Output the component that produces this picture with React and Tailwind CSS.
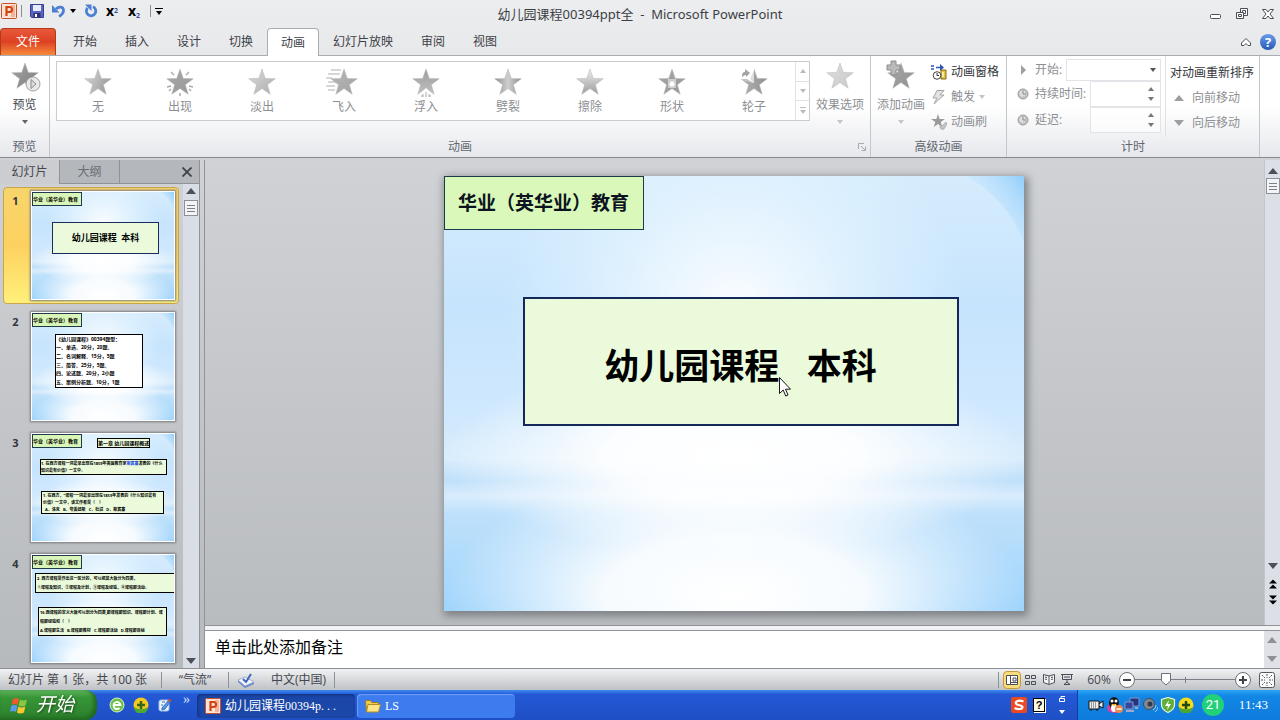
import React, { useState } from 'react';

const STAR = '16,3 19.3,12.4 29.3,12.7 21.4,18.7 24.2,28.3 16,22.6 7.8,28.3 10.6,18.7 2.7,12.7 12.7,12.4';

const tabs = ['开始', '插入', '设计', '切换', '动画', '幻灯片放映', '审阅', '视图'];

const effects = [
  { id: 'none', label: '无' },
  { id: 'appear', label: '出现' },
  { id: 'fade', label: '淡出' },
  { id: 'fly', label: '飞入' },
  { id: 'float', label: '浮入' },
  { id: 'split', label: '劈裂' },
  { id: 'wipe', label: '擦除' },
  { id: 'shape', label: '形状' },
  { id: 'wheel', label: '轮子' },
];

// gradient direction and stops for each star
const starFills = {
  none: { x2: 1, y2: 0.4, stops: ['#dcdcdc', '#9c9c9c'] },
  appear: { x2: 1, y2: 1, stops: ['#a8a8a8', '#989898'] },
  fade: { x2: 1, y2: 1, stops: ['#dadada', '#adadad'] },
  fly: { x2: 1, y2: 1, stops: ['#b8b8b8', '#a2a2a2'] },
  float: { x2: 0, y2: 1, stops: ['#9c9c9c', '#c0c0c0'] },
  split: { x2: 1, y2: 0, stops: ['#8d8d8d', '#cfcfcf', '#8d8d8d'] },
  wipe: { x2: 0, y2: 1, stops: ['#eeeeee', '#9c9c9c'] },
  shape: { x2: 1, y2: 1, stops: ['#a6a6a6', '#999999'] },
  wheel: { x2: 1, y2: 0, stops: ['#b4b4b4', '#909090'] },
  preview: { x2: 1, y2: 1, stops: ['#a4a4a4', '#7e7e7e'] },
  options: { x2: 1, y2: 1, stops: ['#dedede', '#c9c9c9'] },
  add: { x2: 1, y2: 1, stops: ['#a9a9a9', '#8f8f8f'] },
};

function StarIcon({ kind }) {
  const fill = starFills[kind];
  const id = `star-${kind}`;
  return (
    <svg viewBox="0 0 32 32" className="h-8 w-8 shrink-0 overflow-visible" aria-hidden="true">
      <defs>
        <linearGradient id={id} x1="0" y1="0" x2={fill.x2} y2={fill.y2}>
          {fill.stops.map((color, i) => (
            <stop key={i} offset={i / (fill.stops.length - 1)} stopColor={color} />
          ))}
        </linearGradient>
      </defs>
      <polygon points={STAR} fill={`url(#${id})`} stroke="#b5b5b5" strokeWidth="0.5" />
      {kind === 'appear' && (
        <path d="M7 6l3 3M25 6l-3 3M3 21l4-1M29 21l-4-1M16 27v3M5 25l2-2M27 25l-2-2" stroke="#a8a8a8" strokeWidth="1.4" />
      )}
      {kind === 'fly' && (
        <path d="M3 4h10M0 8h12M-2 12h6M0 16h8M-2 20h9M0 24h7" stroke="#b0b0b0" strokeWidth="1.2" />
      )}
      {kind === 'float' && (
        <g>
          <path d="M8 30l8-8 8 8z" fill="#fff" />
          <path d="M16 26v5M13 28v3M19 28v3M11 30h2M19 30h2" stroke="#bdbdbd" strokeWidth="1.3" />
        </g>
      )}
      {kind === 'shape' && (
        <g>
          <path d="M12 13h8v9h-8z" fill="#cfcfcf" />
          <circle cx="16" cy="18" r="2.5" fill="#fff" />
        </g>
      )}
      {kind === 'wheel' && (
        <g>
          <path d="M1 12L14 1l2 1v15L6 14z" fill="#fff" />
          <path d="M16 17V4l-4 9z" fill="#dedede" />
          <path d="M16 17L6 14l-3-1h6z" fill="#c4c4c4" />
          <path d="M4 11c0-4 1-5 3-5V3l5 4-4 4V9c-2 0-2 1-4 2z" fill="#a3a3a3" />
        </g>
      )}
      {kind === 'preview' && (
        <g>
          <circle cx="24" cy="24" r="7" fill="#e9e9e9" stroke="#a0a0a0" />
          <path d="M22 19.500l5 4.500-5 4.500z" fill="#dadada" stroke="#8a8a8a" />
        </g>
      )}
      {kind === 'add' && (
        <path d="M6 1h5v4h4v5h-4v5H6v-5H2V5h4z" fill="#b9b9b9" stroke="#8d8d8d" />
      )}
    </svg>
  );
}

function Arrow({ up = false, className = 'text-[#777]' }) {
  return (
    <svg viewBox="0 0 6 4" className={`h-1 w-1.5 shrink-0 ${className}`} aria-hidden="true">
      <path d={up ? 'M0 4h6L3 0z' : 'M0 0h6L3 4z'} fill="currentColor" />
    </svg>
  );
}

function BigArrow({ up = false, color = 'text-[#4c5059]', className = '' }) {
  return (
    <svg viewBox="0 0 10 6" className={`h-1.5 w-2.5 shrink-0 ${color} ${className}`} aria-hidden="true">
      <path d={up ? 'M0 6h10L5 0z' : 'M0 0h10L5 6z'} fill="currentColor" />
    </svg>
  );
}

function PowerPointLogo() {
  return (
    <svg viewBox="0 0 16 16" className="h-4 w-4 shrink-0" aria-hidden="true">
      <rect x="0.5" y="0.5" width="15" height="15" rx="1" fill="#fbe3d6" stroke="#c9502a" />
      <path d="M10 2h4v12h-4z" fill="#f3b49a" />
      <path d="M5.500 13V4h3a2.500 2.500 0 010 5h-3" fill="none" stroke="#d2430f" strokeWidth="2.200" />
    </svg>
  );
}

function TitleBar() {
  return (
    <header className="grid h-7 grid-cols-[1fr_auto_1fr] items-center pt-px">
      <div className="flex items-center self-start pt-0.5 pl-px">
        <PowerPointLogo />
        <span className="ml-1 h-3 w-px bg-[#8b8e94]" />
        <button className="ml-2" aria-label="保存">
          <svg viewBox="0 0 14 14" className="h-3.5 w-3.5">
            <path d="M0.500 0.500h13v13h-12l-1-1z" fill="#5b63c4" stroke="#3a3f94" />
            <path d="M3 1h8v6H3z" fill="#e8ecfb" />
            <path d="M3.500 9h7v4.500h-7z" fill="#2f3477" />
            <path d="M5 10h2v3H5z" fill="#fff" />
          </svg>
        </button>
        <button className="ml-2" aria-label="撤消">
          <svg viewBox="0 0 14 14" className="h-3.5 w-3.5">
            <path d="M4 5c3-3 7.500-2.500 7.500 1.500 0 3-2 4.500-4.500 6" fill="none" stroke="#4a7fd2" strokeWidth="2.800" />
            <path d="M0 1v7.500h7.500z" fill="#4a7fd2" />
          </svg>
        </button>
        <Arrow className="ml-1 text-black" />
        <button className="ml-2" aria-label="恢复">
          <svg viewBox="0 0 14 14" className="h-3.5 w-3.5">
            <path d="M9 2.800a4.700 4.700 0 11-5.500 1.200" fill="none" stroke="#4a7fd2" strokeWidth="2.800" />
            <path d="M1 0.500h6.500v6.500z" fill="#4a7fd2" />
          </svg>
        </button>
        <button className="ml-2 w-3.5 text-left text-sm leading-4 font-bold text-black" aria-label="上标">x<sup className="text-[7px] text-[#3c4c9c]">2</sup></button>
        <button className="ml-2 w-3.5 text-left text-sm leading-4 font-bold text-black" aria-label="下标">x<sub className="text-[7px] text-[#3c4c9c]">2</sub></button>
        <span className="ml-2 h-3 w-px bg-[#8b8e94]" />
        <button className="ml-1 flex flex-col items-center gap-0.5" aria-label="自定义快速访问工具栏">
          <span className="h-px w-2 bg-black" />
          <Arrow className="text-black" />
        </button>
      </div>
      <h1 className="font-['Noto_Sans','Noto_Sans_CJK_SC',sans-serif] text-[13px] whitespace-pre text-[#3b3f45]">幼儿园课程00394ppt全  -  Microsoft PowerPoint</h1>
      <div className="flex items-center justify-end gap-3.5 pr-1.5 pb-0.5 text-[#4a4e58]">
        <button aria-label="最小化">
          <svg viewBox="0 0 12 12" className="h-3 w-3" fill="#fff" stroke="currentColor"><rect x="0.5" y="6.500" width="10" height="4" rx="1" /></svg>
        </button>
        <button aria-label="还原">
          <svg viewBox="0 0 12 12" className="h-3 w-3" fill="#fff" stroke="currentColor">
            <path d="M4.500 0.500h7v7h-7z" /><path d="M6.500 2.500h3v3h-3z" />
            <path d="M0.500 4.500h7v6h-7z" /><path d="M2.500 6.500h3v2h-3z" />
          </svg>
        </button>
        <button aria-label="关闭">
          <svg viewBox="0 0 12 12" className="h-3 w-3" fill="#fff" stroke="currentColor">
            <path d="M0.500 1.500h3.500l2 2.500 2-2.500h3.500l-3.500 4.500 3.500 4.500H8L6 8l-2 2.500H0.500L4 6z" />
          </svg>
        </button>
      </div>
    </header>
  );
}

function RibbonTabs({ active, onSelect }) {
  return (
    <nav className="flex h-7 items-end border-b border-[#a9adb2] text-xs text-[#3c4046]">
      <button className="h-[27px] w-14 rounded-t border border-b-0 border-[#b23a1a] bg-linear-to-b from-[#e8593a] via-[#dd4022] to-[#f58a3c] text-white">文件</button>
      <div className="ml-[3px] flex items-end">
        {tabs.map((tab) => (
          <button
            key={tab}
            onClick={() => onSelect(tab)}
            className={
              tab === active
                ? '-mb-px h-7 rounded-t border border-b-0 border-[#a9adb2] bg-white px-[13px]'
                : 'h-[27px] border-x border-transparent px-[13px] hover:bg-white/50'
            }
          >
            {tab}
          </button>
        ))}
      </div>
      <div className="ml-auto flex items-center gap-2 self-center pr-1">
        <button aria-label="功能区最小化">
          <svg viewBox="0 0 12 12" className="h-3 w-3" fill="#fff" stroke="#4a4e58">
            <path d="M1.500 7L6 2.500 10.500 7v2.500H8L6 7.500 4 9.500H1.500z" />
          </svg>
        </button>
        <button className="h-4 w-4 rounded-full bg-linear-to-b from-[#6b9be8] to-[#2559b8] text-[13px] leading-4 font-bold text-white" aria-label="帮助">?</button>
      </div>
    </nav>
  );
}

function Group({ label, className = '', launcher, children }) {
  return (
    <section className={`flex flex-col border-r border-[#c3c6cb] ${className}`}>
      <div className="flex h-20 flex-1">{children}</div>
      <div className="relative h-5 text-center text-xs leading-5 text-[#62666e]">
        {label}
        {launcher && (
          <button className="absolute right-1 bottom-1.5" aria-label="显示其他效果选项">
            <svg viewBox="0 0 8 8" className="h-2 w-2" fill="none" stroke="#aaa">
              <path d="M0.500 6V0.500H6M3 3l4 4M7.500 3.500v4h-4" />
            </svg>
          </button>
        )}
      </div>
    </section>
  );
}

function ClockIcon() {
  return (
    <svg viewBox="0 0 12 12" className="h-3 w-3 shrink-0" aria-hidden="true">
      <circle cx="6" cy="6" r="5" fill="#c4c4c4" stroke="#999" />
      <circle cx="5.500" cy="5.500" r="3" fill="#dedede" />
      <path d="M6 2.500V6h3" fill="none" stroke="#8a8a8a" />
    </svg>
  );
}

function Spinner({ id, label }) {
  return (
    <div className="flex h-[26px] items-center">
      <ClockIcon />
      <label htmlFor={id} className="ml-1.5 w-[55px] whitespace-nowrap">{label}</label>
      <div className="flex h-[26px] flex-1 items-center border border-[#e2e4e8] bg-white/60 pr-1.5">
        <input id={id} className="h-full w-0 min-w-0 flex-1 outline-none" />
        <span className="flex flex-col gap-1.5">
          <Arrow up />
          <Arrow />
        </span>
      </div>
    </div>
  );
}

function Ribbon() {
  return (
    <div className="flex h-[102px] border-b border-[#868996] bg-linear-to-b from-white via-white to-[#e6e8ec] text-xs text-[#8d8f93]">
      <Group label="预览" className="w-[50px]">
        <button className="flex w-full flex-col items-center pt-1 text-[#44474d]">
          <StarIcon kind="preview" />
          <span className="mt-1 leading-[18px]">预览</span>
          <Arrow className="mt-1.5 text-[#666]" />
        </button>
      </Group>

      <Group label="动画" className="flex-1" launcher>
        <div className="ml-1.5 mt-[5px] flex h-[60px] flex-1 border border-[#c9ccd0] bg-white">
          <div className="grid flex-1 grid-cols-9">
            {effects.map((effect) => (
              <button key={effect.id} className="flex flex-col items-center pt-1">
                <StarIcon kind={effect.id} />
                <span className="leading-[18px]">{effect.label}</span>
              </button>
            ))}
          </div>
          <div className="flex w-3.5 flex-col divide-y divide-[#e0e2e5] border-l border-[#e0e2e5]">
            <button className="flex flex-1 items-center justify-center" aria-label="上一行"><Arrow up className="text-[#bbb]" /></button>
            <button className="flex flex-1 items-center justify-center" aria-label="下一行"><Arrow className="text-[#bbb]" /></button>
            <button className="flex flex-1 flex-col items-center justify-center gap-0.5" aria-label="其他">
              <span className="h-px w-1.5 bg-[#bbb]" />
              <Arrow className="text-[#bbb]" />
            </button>
          </div>
        </div>
        <button className="flex w-[60px] flex-col items-center pt-1">
          <StarIcon kind="options" />
          <span className="mt-1 leading-[18px]">效果选项</span>
          <Arrow className="mt-1.5 text-[#c4c4c4]" />
        </button>
      </Group>

      <Group label="高级动画" className="w-[136px]">
        <button className="flex w-[60px] flex-col items-center pt-1">
          <StarIcon kind="add" />
          <span className="mt-1 leading-[18px]">添加动画</span>
          <Arrow className="mt-1.5 text-[#c4c4c4]" />
        </button>
        <div className="flex flex-col pt-[3px]">
          <button className="flex h-[25px] items-center gap-1 text-[#33363b]">
            <svg viewBox="0 0 16 16" className="h-4 w-4" aria-hidden="true">
              <path d="M0 2h3M0 5h3M5 3.500h5" stroke="#2c55b8" strokeWidth="1.500" />
              <path d="M9 0l4 3.500L9 7z" fill="#2c55b8" />
              <path d="M10 6h5v9h-5z" fill="#e8c04a" stroke="#8a6a14" />
              <path d="M12 8v5" stroke="#fff6c8" strokeWidth="1.500" />
              <circle cx="6" cy="11.500" r="3.800" fill="#fff" stroke="#444" />
              <path d="M6 9v2.500h2" fill="none" stroke="#333" />
            </svg>
            动画窗格
          </button>
          <button className="flex h-[25px] items-center gap-1">
            <svg viewBox="0 0 16 16" className="h-4 w-4" aria-hidden="true">
              <path d="M6 1.500h7l-4 4.500h4L3 15l3-6H2z" fill="#e2e2e2" stroke="#a5a5a5" />
            </svg>
            触发
            <Arrow className="text-[#c4c4c4]" />
          </button>
          <button className="flex h-[25px] items-center gap-1">
            <svg viewBox="0 0 16 16" className="h-4 w-4" aria-hidden="true">
              <path d="M7 0l1.600 5H14l-4.200 3 1.500 5L7 10l-4.300 3 1.600-5L0 5h5.400z" fill="#9a9a9a" />
              <path d="M9 10l2 2 4-4 1 2-3 5c-2 1-4 0-4-2z" fill="#c4c4c4" stroke="#999" strokeWidth="0.600" />
            </svg>
            动画刷
          </button>
        </div>
      </Group>

      <Group label="计时" className="w-[253px]">
        <div className="flex w-[159px] flex-col border-r border-[#dfe1e4] pt-[3px] pr-1 pl-2.5">
          <div className="flex h-[22px] items-center">
            <svg viewBox="0 0 12 12" className="h-3 w-3 shrink-0" aria-hidden="true">
              <path d="M4 1l5 5-5 5z" fill="#a0a0a0" />
            </svg>
            <label htmlFor="start" className="ml-1.5 w-[31px] whitespace-nowrap">开始:</label>
            <div className="relative flex h-[22px] flex-1 items-center border border-[#e2e4e8] bg-white/60">
              <select id="start" className="h-full w-full appearance-none outline-none" defaultValue="">
                <option value=""></option>
              </select>
              <Arrow className="absolute right-1 text-[#555]" />
            </div>
          </div>
          <Spinner id="duration" label="持续时间:" />
          <Spinner id="delay" label="延迟:" />
        </div>
        <div className="flex flex-col pt-1 pl-1">
          <div className="h-[25px] leading-[25px] text-[#33363b]">对动画重新排序</div>
          <button className="flex h-[25px] items-center gap-2 pl-1"><BigArrow up color="text-[#9c9ea2]" />向前移动</button>
          <button className="flex h-[25px] items-center gap-2 pl-1"><BigArrow color="text-[#9c9ea2]" />向后移动</button>
        </div>
      </Group>
      <div className="w-5" />
    </div>
  );
}

// Light blue "flow" theme background
function SlideBackground({ id }) {
  return (
    <svg viewBox="0 0 580 435" preserveAspectRatio="none" className="absolute inset-0 h-full w-full" aria-hidden="true">
      <defs>
        <linearGradient id={`${id}-base`} x1="0" y1="0" x2="0" y2="1">
          <stop offset="0" stopColor="#d6ecfd" />
          <stop offset="0.3" stopColor="#c6e4fd" />
          <stop offset="0.55" stopColor="#cfe8fe" />
          <stop offset="0.65" stopColor="#d9edfc" />
          <stop offset="0.7" stopColor="#bfe0fa" />
          <stop offset="0.735" stopColor="#d9ecfd" />
          <stop offset="0.775" stopColor="#bfe1fb" />
          <stop offset="1" stopColor="#9fd4fc" />
        </linearGradient>
        <radialGradient id={`${id}-top`} cx="0.5" cy="0.5" r="0.5">
          <stop offset="0" stopColor="#fbfdff" />
          <stop offset="0.4" stopColor="#eef8ff" stopOpacity="0.75" />
          <stop offset="0.75" stopColor="#e2f4ff" stopOpacity="0.4" />
          <stop offset="1" stopColor="#e2f4ff" stopOpacity="0" />
        </radialGradient>
        <radialGradient id={`${id}-low`} cx="0.5" cy="0.5" r="0.5">
          <stop offset="0" stopColor="#fff" />
          <stop offset="0.45" stopColor="#fff" stopOpacity="0.9" />
          <stop offset="0.75" stopColor="#fff" stopOpacity="0.4" />
          <stop offset="1" stopColor="#fff" stopOpacity="0" />
        </radialGradient>
        <linearGradient id={`${id}-corner`} x1="1" y1="0" x2="0.4" y2="0.5">
          <stop offset="0" stopColor="#8fcefb" />
          <stop offset="1" stopColor="#bfe2fd" stopOpacity="0.3" />
        </linearGradient>
      </defs>
      <rect width="580" height="435" fill={`url(#${id}-base)`} />
      <ellipse cx="290" cy="130" rx="230" ry="210" fill={`url(#${id}-top)`} />
      <ellipse cx="290" cy="280" rx="290" ry="100" fill={`url(#${id}-low)`} />
      <ellipse cx="290" cy="420" rx="290" ry="130" fill={`url(#${id}-low)`} />
      <path d="M522 0Q562 22 580 66V0z" fill={`url(#${id}-corner)`} />
    </svg>
  );
}

function ThumbBrand() {
  return (
    <div className="absolute top-0 left-0 flex h-3.5 w-[50px] items-center overflow-hidden border border-[#1f3a4a] bg-[#d9f5b8] text-[5px] leading-none font-bold whitespace-nowrap">
      华业（英华业）教育
    </div>
  );
}

function SlideOneThumb() {
  return (
    <div className="absolute top-[30px] left-5 flex h-8 w-[107px] items-center justify-center border border-[#1a2c5c] bg-[#eafadb] text-[9px] font-bold whitespace-pre">
      幼儿园课程  本科
    </div>
  );
}

function SlideTwoThumb() {
  const lines = [
    '《幼儿园课程》00394题型：',
    '一、单选。20分，20题。',
    '二、名词解释。15分，5题',
    '三、简答。25分，5题。',
    '四、论述题。20分，2小题',
    '五、案例分析题。10分，1题',
  ];
  return (
    <div className="absolute top-[21px] left-[23px] flex h-[54px] w-[88px] flex-col justify-around border border-black bg-white text-[5px] leading-none font-bold whitespace-nowrap">
      {lines.map((line) => <p key={line}>{line}</p>)}
    </div>
  );
}

function SlideThreeThumb() {
  return (
    <div className="text-[4px] leading-[7px] font-bold whitespace-nowrap">
      <p className="absolute top-1 left-[65px] h-2.5 w-[53px] overflow-hidden border border-black bg-[#eafadb] text-[5px] leading-2">第一章 幼儿园课程概述</p>
      <div className="absolute top-[25px] left-2 w-[127px] overflow-hidden border border-black bg-[#eafadb]">
        <p>1. 在西方课程一词最早出现在1859年英国教育家<span className="text-blue-700">斯宾塞</span>发表的《什么</p>
        <p>知识最有价值》一文中。</p>
      </div>
      <div className="absolute top-[57px] left-[9px] w-[123px] overflow-hidden border border-black bg-[#eafadb] pl-px">
        <p>1. 在西方，“课程”一词最早出现在1859年发表的《什么知识最有</p>
        <p>价值》一文中，该文作者是（　）</p>
        <p className="pl-0.5 whitespace-pre">A．洛克   B．夸美纽斯   C．杜威   D．斯宾塞</p>
      </div>
    </div>
  );
}

function SlideFourThumb() {
  return (
    <div className="text-[4px] leading-[9px] font-bold whitespace-nowrap">
      <div className="absolute top-[18px] right-0 left-[3px] border border-r-0 border-black bg-[#eafadb] pl-px">
        <p>2. 西方课程是作出这一区分的，可以把其大致分为四类，</p>
        <p>①课程及知识，②课程及计划，③课程及经验，④课程即活动。</p>
      </div>
      <div className="absolute top-[52px] left-1.5 w-[129px] border border-black bg-[#eafadb] pl-px">
        <p>16.西课程的定义大致可以划分为四类,即课程即知识、课程即计划、课</p>
        <p>程即经验和（　）</p>
        <p className="whitespace-pre">A.课程即生活   B.课程即教材   C.课程即活动   D.课程即目标</p>
      </div>
    </div>
  );
}

const slides = [SlideOneThumb, SlideTwoThumb, SlideThreeThumb, SlideFourThumb];

function ScrollGrip() {
  return (
    <div className="flex h-4 w-3.5 flex-col items-center justify-center gap-0.5 border border-[#8c9098] bg-[#f1f3f5]">
      <span className="h-px w-2 bg-[#7b7f88]" />
      <span className="h-px w-2 bg-[#7b7f88]" />
      <span className="h-px w-2 bg-[#7b7f88]" />
    </div>
  );
}

function SlidePanel({ current, onSelect }) {
  return (
    <aside className="flex w-[200px] shrink-0 flex-col border-r border-[#8f9299]">
      <div className="flex h-6 shrink-0 border-b border-[#8f9299] bg-[#b4b7bc] text-xs">
        <button className="-mb-px w-[60px] border-r border-[#8f9299] bg-[#cbcdd1] text-[#44474d]">幻灯片</button>
        <button className="w-[60px] border-r border-[#8f9299] text-[#6a6d73]">大纲</button>
        <button className="mr-1 ml-auto w-4" aria-label="关闭窗格">
          <svg viewBox="0 0 10 10" className="mx-auto h-2.5 w-2.5"><path d="M0.500 0.500l9 9M9.500 0.500l-9 9" stroke="#3f4248" strokeWidth="1.800" /></svg>
        </button>
      </div>
      <div className="flex min-h-0 flex-1">
        <ol className="flex flex-1 flex-col gap-1 overflow-hidden pt-[3px] pr-1 pl-[3px]">
          {slides.map((Content, i) => (
            <li key={i} className="shrink-0">
              <button
                onClick={() => onSelect(i)}
                className={`flex h-[117px] w-full border pt-[3px] text-left ${
                  i === current
                    ? 'rounded-sm border-[#c9a64a] bg-linear-to-b from-[#f7d56c] via-[#fdd160] to-[#fff07a]'
                    : 'border-transparent'
                }`}
              >
                <span className="w-[27px] pt-0.5 pr-1 text-center font-['Open_Sans'] text-[11px] leading-4 font-bold text-[#33363b]">{i + 1}</span>
                <span className="relative block h-[109px] w-36 overflow-hidden border border-white text-black shadow-[0_0_2px_1px_#77797e]">
                  <SlideBackground id={`thumb-${i}`} />
                  <ThumbBrand />
                  <Content />
                </span>
              </button>
            </li>
          ))}
        </ol>
        <div className="flex w-4 flex-col items-center bg-[#d9dde5] py-1">
          <BigArrow up />
          <div className="mt-1.5"><ScrollGrip /></div>
          <BigArrow className="mt-auto" />
        </div>
      </div>
    </aside>
  );
}

function DoubleArrow({ up = false }) {
  return (
    <svg viewBox="0 0 8 10" className="h-2.5 w-2" aria-hidden="true">
      <path d={up ? 'M0 4.500h8L4 0.500zM0 9.500h8L4 5.500z' : 'M0 0.500h8L4 4.500zM0 5.500h8L4 9.500z'} fill="#000" />
    </svg>
  );
}

function Editor() {
  return (
    <main className="flex min-w-0 flex-1 flex-col border-l border-[#8f9299]">
      <div className="flex min-h-0 flex-1">
        <div className="flex flex-1 items-center justify-center pt-0.5 pr-0.5">
          <div className="relative aspect-[4/3] w-[580px] overflow-hidden shadow-[2px_3px_8px_2px_#7d8084]">
            <SlideBackground id="slide" />
            <div className="absolute top-0 left-0 flex h-[54px] w-[200px] items-center justify-center border border-[#1b3a4b] bg-[#d9f8b9] text-[19px] font-bold whitespace-nowrap text-[#0b1420]">
              华业（英华业）教育
            </div>
            <div className="absolute top-[121px] left-[79px] flex h-[129px] w-[436px] items-center justify-center border-2 border-[#14285a] bg-[#eafadb] pt-2.5 text-[35px] font-bold whitespace-pre text-black">
              幼儿园课程   本科
            </div>
            <svg viewBox="0 0 12 20" className="absolute top-[201px] left-[335px] h-5 w-3" aria-hidden="true">
              <path d="M0.500 0.500v16l3.700-3.500 2.500 6 2.300-1-2.500-5.800h5z" fill="#fff" stroke="#000" strokeWidth="0.900" />
            </svg>
          </div>
        </div>
        <div className="flex w-4 flex-col items-center border-l border-[#c3c6cc] bg-[#dcdfe6] pt-2 pb-5">
          <BigArrow up />
          <div className="mt-1"><ScrollGrip /></div>
          <BigArrow className="mt-auto mb-2.5" />
          <DoubleArrow up />
          <div className="mt-1.5"><DoubleArrow /></div>
        </div>
      </div>
      <div className="flex h-[43px] shrink-0 border-t border-[#8f9299] bg-[#f1f2f4] pt-1">
        <textarea aria-label="备注" className="h-full min-w-0 flex-1 resize-none border-t border-[#8f9299] bg-white px-2.5 py-1 text-base leading-6 text-black outline-none" defaultValue="单击此处添加备注" />
        <div className="flex w-4 flex-col items-center justify-between border-t border-[#8f9299] bg-[#dfe1e6] py-1.5">
          <BigArrow up color="text-[#8d9097]" />
          <BigArrow color="text-[#8d9097]" />
        </div>
      </div>
    </main>
  );
}

function StatusBar() {
  return (
    <footer className="flex h-[22px] shrink-0 items-center border-t border-[#8b8e94] bg-linear-to-b from-[#f1f2f3] to-[#bfc2c6] text-xs text-[#44474d]">
      <span className="w-[162px] border-r border-[#8f9299] pl-2 font-['Noto_Sans','Noto_Sans_CJK_SC',sans-serif] whitespace-nowrap">幻灯片 第 1 张，共 100 张</span>
      <span className="w-[67px] border-r border-[#8f9299] text-center">“气流”</span>
      <svg viewBox="0 0 18 16" className="ml-2 h-4 w-[18px]" aria-hidden="true">
        <path d="M1 8l7 5 9-3v2l-9 4-7-6z" fill="#6c86c6" />
        <path d="M1 8l7-3 9 5-9 4z" fill="#f4f7fd" stroke="#8b9fd0" strokeWidth="0.800" />
        <path d="M6 7l3 3 5-8" fill="none" stroke="#3f66bd" strokeWidth="2" />
      </svg>
      <button className="ml-4">中文(中国)</button>
      <span className="ml-2 h-4 w-px bg-[#8f9299]" />
      <div className="ml-auto flex items-center">
        <span className="h-4 w-px bg-[#8f9299]" />
        <button className="ml-1 flex h-[18px] w-[18px] items-center justify-center rounded-sm border border-[#c29a3a] bg-[#fbdc7c]" aria-label="普通视图">
          <svg viewBox="0 0 12 10" className="h-2.5 w-3" fill="#fff" stroke="#4a4e58"><path d="M0.500 0.500h11v9H0.500zM4.500 0.500v9M7 3h3v3H7zM4.500 7.500h7" /></svg>
        </button>
        <button className="ml-1" aria-label="幻灯片浏览">
          <svg viewBox="0 0 12 10" className="h-2.5 w-3" fill="none" stroke="#4a4e58"><path d="M0.500 0.500h4v3h-4zM6.500 0.500h4v3h-4zM0.500 6.500h4v3h-4zM6.500 6.500h4v3h-4z" /></svg>
        </button>
        <button className="ml-1.5" aria-label="阅读视图">
          <svg viewBox="0 0 12 11" className="h-[11px] w-3" fill="#f4f4f4" stroke="#4a4e58"><path d="M0.500 0.500L6 2l5.500-1.500v8L6 10.500 0.500 8.500zM6 2v8M2 3l2 .5M2 5l2 .5M8 3.500l2-.5M8 5.500l2-.5" /></svg>
        </button>
        <button className="ml-1.5" aria-label="幻灯片放映">
          <svg viewBox="0 0 12 11" className="h-[11px] w-3" fill="none" stroke="#4a4e58"><path d="M0 0.500h12M1.500 0.500v5h9v-5M3 3h6M6 5.500V8M3 10.500L6 8l3 2.500z" /></svg>
        </button>
        <button className="ml-3 w-7">60%</button>
        <button className="ml-1.5 flex h-4 w-4 items-center justify-center rounded-full border border-[#6c7078] bg-white" aria-label="缩小"><span className="h-0.5 w-2 bg-[#3f434b]" /></button>
        <span className="relative flex h-4 w-[100px] items-center">
          <span className="h-px w-full bg-[#7b7f88]" />
          <span className="absolute left-1/2 h-1.5 w-px bg-[#7b7f88]" />
          <input type="range" aria-label="显示比例" min="10" max="400" defaultValue="60" className="absolute inset-0 w-full opacity-0" />
          <svg viewBox="0 0 10 13" className="pointer-events-none absolute left-[26px] h-[13px] w-2.5"><path d="M0.500 0.500h9v7.500L5 12 0.500 8z" fill="#fff" stroke="#6c7078" /></svg>
        </span>
        <button className="flex h-4 w-4 items-center justify-center rounded-full border border-[#6c7078] bg-white" aria-label="放大">
          <svg viewBox="0 0 8 8" className="h-2 w-2"><path d="M4 0v8M0 4h8" stroke="#3f434b" strokeWidth="2" /></svg>
        </button>
        <button className="mr-[5px] ml-2" aria-label="适应窗口">
          <svg viewBox="0 0 16 16" className="h-4 w-4"><rect x="0.500" y="0.500" width="15" height="15" rx="2" fill="#fafafa" stroke="#55585f" /><path d="M8 2v4M8 10v4M2 8h4M10 8h4M3 3l3 3M13 3l-3 3M3 13l3-3M13 13l-3-3" stroke="#55585f" strokeDasharray="2 1" /></svg>
        </button>
      </div>
    </footer>
  );
}

function Taskbar() {
  return (
    <div className="flex h-[30px] shrink-0 items-stretch bg-linear-to-b from-[#3f8af0] via-[#2458d6] via-15% to-[#1f4fc4] font-['Liberation_Serif','Noto_Sans_CJK_SC',serif] text-xs text-white">
      <button className="flex w-[97px] items-center gap-2 rounded-r-xl bg-linear-to-b from-[#5eb45c] via-[#379637] via-25% to-[#2c7f2c] pl-2.5 shadow-[inset_-3px_-2px_4px_#1f661f] font-['Noto_Sans_CJK_SC',sans-serif]">
        <svg viewBox="0 0 18 17" className="h-[17px] w-[18px]" aria-hidden="true">
          <path d="M3 2q3-2 6 0L7.500 8q-3-2-6 0z" fill="#ee5a2a" />
          <path d="M10 2.500q3 2 7 0L15.500 8.500q-4 2-7 0z" fill="#86c940" />
          <path d="M1.300 9q3-2 6 0L6 15q-3-2-6 0z" fill="#5a9bf0" />
          <path d="M8.300 9.500q3 2 7 0L14 15.500q-4 2-7 0z" fill="#fbc72c" />
        </svg>
        <span className="pb-1 text-[19px] leading-6 italic drop-shadow-[1px_1px_1px_#1c4d1c]">开始</span>
      </button>
      <div className="ml-3 flex items-center gap-2">
        <button aria-label="浏览器">
          <svg viewBox="0 0 16 16" className="h-4 w-4"><circle cx="8" cy="8" r="7" fill="#6cc24a" stroke="#d9f2c8" /><path d="M4.500 8h7a3.500 3.500 0 10-1 3" fill="none" stroke="#fff" strokeWidth="1.800" /></svg>
        </button>
        <button aria-label="安全卫士">
          <svg viewBox="0 0 16 16" className="h-4 w-4"><circle cx="8" cy="8" r="7.500" fill="#f6c81e" /><path d="M1 10a7 7 0 0014 0c-4 3-10 3-14 0z" fill="#4ea632" /><path d="M8 4v8M4 8h8" stroke="#34691c" strokeWidth="2.500" /></svg>
        </button>
        <button aria-label="显示桌面">
          <svg viewBox="0 0 16 16" className="h-4 w-4"><rect x="2" y="3" width="10" height="11" rx="2" fill="#eef5ff" stroke="#9cc3f0" /><path d="M5 11l6-7 2 1-5 7-3 1zM5 5h3M4 8h2" fill="#5c9ae0" stroke="#2f6fc2" /><path d="M11 3l3 1" stroke="#d05530" strokeWidth="2" /></svg>
        </button>
      </div>
      <span className="ml-2.5 w-2 pt-0.5 text-sm leading-4 text-[#d5e3ff]">»</span>
      <div className="ml-1.5 flex min-w-0 gap-0.5 pt-1 pb-0.5">
        <button className="flex w-[158px] items-center gap-1 rounded-sm bg-[#1b47a8] pl-2 shadow-[inset_1px_1px_3px_#0f2e78]">
          <PowerPointLogo />
          <span className="whitespace-nowrap">幼儿园课程00394p. . .</span>
        </button>
        <button className="flex w-[158px] items-center gap-1 rounded-sm bg-[#3c7cee] pl-2 shadow-[inset_1px_1px_1px_#6ea0f8]">
          <svg viewBox="0 0 16 14" className="h-3.5 w-4" aria-hidden="true">
            <path d="M0.500 2.500q0-1 1-1h4l1.500 2h6.500v9h-12z" fill="#f0c94f" stroke="#9b7a1a" />
            <path d="M3 5.500h12.500l-2 7.500h-12z" fill="#fde68a" stroke="#b28d22" />
          </svg>
          LS
        </button>
      </div>
      <div className="mr-3 ml-auto flex items-center gap-1.5">
        <svg viewBox="0 0 16 16" className="h-4 w-4" aria-hidden="true"><rect width="16" height="16" rx="2" fill="#ea4a22" /><path d="M12.500 4.500C7 2.500 3 5 5.500 7.200c2 1.400 6 .8 6 3-.5 2.300-5 2.300-8 .8" fill="none" stroke="#fff" strokeWidth="2.200" /></svg>
        <span className="flex h-3.5 w-3 items-center justify-center border border-black bg-[#fffbe0] font-['Liberation_Sans',sans-serif] text-[11px] font-bold text-black shadow-[1px_1px_0_#fff]">?</span>
        <span className="ml-2 flex flex-col items-center gap-2">
          <svg viewBox="0 0 6 6" className="h-1.5 w-1.5" fill="none" stroke="#fff"><path d="M2 2.500V0.500h4M0.500 2.500h5v3h-5z" /></svg>
          <Arrow className="text-white" />
        </span>
      </div>
      <div className="flex w-[203px] items-center border-l border-[#0d3f9c] bg-linear-to-b from-[#2aa4f5] via-[#1287e6] via-20% to-[#0f7bdc] pl-2.5">
        <svg viewBox="0 0 16 16" className="h-4 w-4" aria-hidden="true"><path d="M1 4h10v8H1zM11 7l4-3v7l-4-2M3 12v2M9 12v2" fill="#eee" stroke="#111" /><path d="M3 6h6M3 8h6M3 10h5" stroke="#444" strokeDasharray="1 1" /></svg>
        <svg viewBox="0 0 18 18" className="ml-0.5 h-[18px] w-[18px]" aria-hidden="true"><ellipse cx="8" cy="12" rx="7" ry="5" fill="#e23a9e" /><ellipse cx="8" cy="7" rx="5" ry="6" fill="#161616" /><ellipse cx="8" cy="12" rx="3" ry="4" fill="#fff" /><circle cx="6" cy="5" r="1.500" fill="#fff" /><circle cx="10" cy="5" r="1.500" fill="#fff" /><path d="M5 8h6l-3 2z" fill="#f6b31c" /><circle cx="13" cy="13" r="4" fill="#f08a4a" /><path d="M10.500 13h5" stroke="#fff" strokeWidth="1.500" /></svg>
        <svg viewBox="0 0 16 16" className="h-4 w-4" aria-hidden="true"><path d="M6 1h9v8H6z" fill="#24347e" stroke="#8a97c4" /><path d="M1 5h8v7H1z" fill="#33479c" stroke="#8a97c4" /><path d="M2 14h8M11 11h3" stroke="#9fa9cc" strokeWidth="2" /></svg>
        <svg viewBox="0 0 16 16" className="ml-0.5 h-4 w-4" aria-hidden="true"><circle cx="7" cy="7" r="5.500" fill="#7f8896" stroke="#444c58" /><circle cx="8" cy="7" r="2.500" fill="#343a44" /><path d="M11 13q3-1 3-5M13 15q3-2 3-5" fill="none" stroke="#9fc8f8" /></svg>
        <svg viewBox="0 0 16 16" className="ml-0.5 h-4 w-4" aria-hidden="true"><path d="M8 0.500l6.500 2v5c0 4-3 6.500-6.500 8-3.500-1.500-6.500-4-6.500-8v-5z" fill="#5fae38" stroke="#e9f6e0" strokeWidth="1.200" /><path d="M9 3L5 9h3l-1 4 4-6H8z" fill="#fff" /></svg>
        <svg viewBox="0 0 16 16" className="ml-0.5 h-4 w-4" aria-hidden="true"><circle cx="8" cy="8" r="7.500" fill="#f6dc1e" /><path d="M1 10a7 7 0 0014 0c-4 3-10 3-14 0z" fill="#4ea632" /><path d="M8 4v8M4 8h8" stroke="#224a10" strokeWidth="2.500" /></svg>
        <span className="ml-2 flex h-[22px] w-[22px] items-center justify-center rounded-full bg-[#22d07a] font-['Roboto',sans-serif] text-[13px]">21</span>
        <time className="ml-auto pr-3 text-[13px]">11:43</time>
      </div>
    </div>
  );
}

export default function App() {
  const [activeTab, setActiveTab] = useState('动画');
  const [current, setCurrent] = useState(0);

  return (
    <div className="flex h-screen flex-col overflow-hidden bg-linear-to-b from-[#ebecee] to-[#e0e2e4] font-['Open_Sans','Noto_Sans_CJK_SC',sans-serif]">
      <div className="shrink-0 bg-linear-to-b from-[#ecedef] to-[#dfe1e3]">
        <TitleBar />
        <RibbonTabs active={activeTab} onSelect={setActiveTab} />
        <Ribbon />
      </div>
      <div className="flex min-h-0 flex-1 gap-1 bg-linear-to-b from-[#d0d2d6] to-[#b7babd] pt-0.5">
        <SlidePanel current={current} onSelect={setCurrent} />
        <Editor />
      </div>
      <StatusBar />
      <Taskbar />
    </div>
  );
}
